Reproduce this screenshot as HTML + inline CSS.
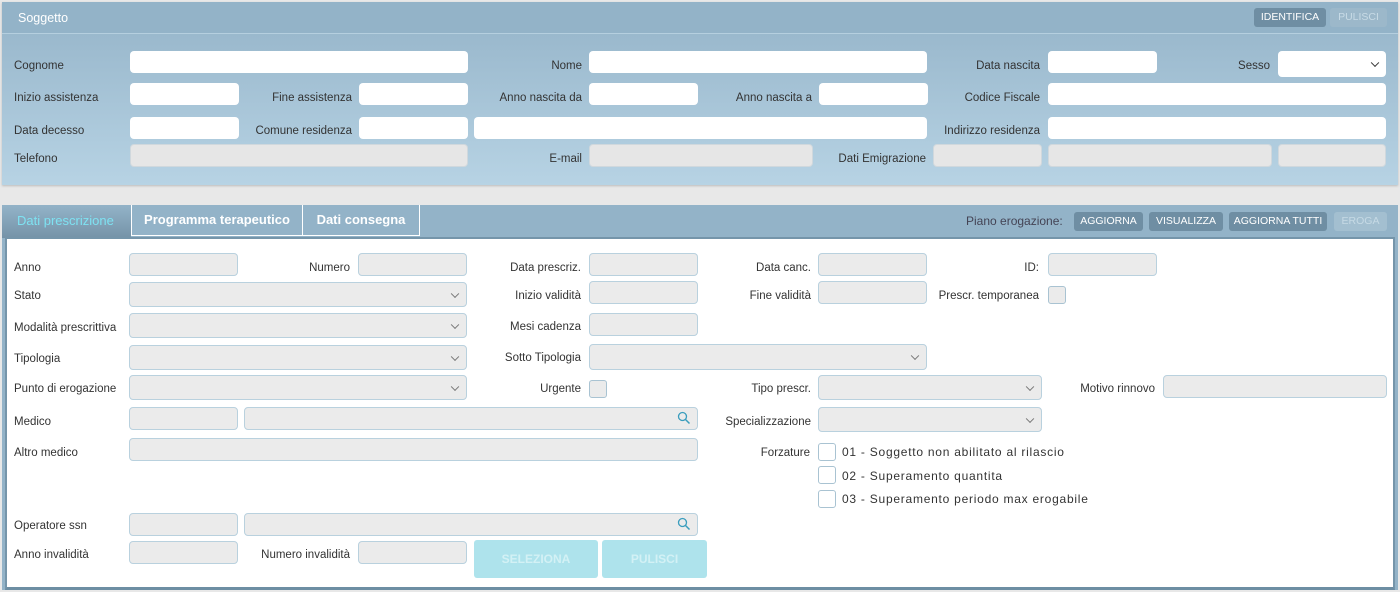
<!DOCTYPE html>
<html><head><meta charset="utf-8"><style>
*{box-sizing:border-box;margin:0;padding:0}
body{width:1400px;height:592px;background:#e8e8e8;font-family:"Liberation Sans",sans-serif;font-size:11.5px;color:#333;position:relative;overflow:hidden}
.a{position:absolute}
.p1{left:2px;top:2px;width:1396px;height:183px;background:linear-gradient(#94b3c8,#b7d3e4);box-shadow:0 1px 2px #bbb}
.h1{left:2px;top:2px;width:1396px;height:32px;background:#93b3c8;border-bottom:1px solid #b5cfdf;color:#fff;font-size:12.5px;padding:9px 0 0 16px}
.l{position:absolute;text-align:right;white-space:nowrap;line-height:14px}
.ll{position:absolute;white-space:nowrap;line-height:14px}
.w{position:absolute;background:#fff;border-radius:4px;height:22px}
.g{position:absolute;background:#ebebeb;border:1px solid #b9d1de;border-radius:4px;height:23px}
.gt{position:absolute;background:#e6e6e6;border-radius:4px;height:23px;border:1px solid #d0d8dd}
.btn{position:absolute;border-radius:3px;color:#fff;font-size:10.5px;text-align:center;line-height:19px;height:19px}
.chev{position:absolute;right:8px;top:50%;width:6px;height:6px;border-right:1.5px solid #777;border-bottom:1.5px solid #777;transform:translateY(-70%) rotate(45deg)}
.chk{position:absolute;width:18px;height:18px;border:1px solid #a9c3d2;border-radius:3px;background:#fff}
.srch{position:absolute;right:6px;top:3px}
.fz{font-size:12px;letter-spacing:0.75px}
</style></head><body>
<div class="a p1"></div>
<div class="a h1">Soggetto</div>
<div class="btn" style="left:1254px;top:8px;width:72px;background:#6f8ea3">IDENTIFICA</div>
<div class="btn" style="left:1330px;top:8px;width:57px;background:#9cb8ca;color:#c8dbe6">PULISCI</div>

<div class="ll" style="left:14px;top:59px">Cognome</div>
<div class="w" style="left:130px;top:51px;width:338px"></div>
<div class="l" style="left:480px;width:102px;top:59px">Nome</div>
<div class="w" style="left:589px;top:51px;width:338px"></div>
<div class="l" style="left:900px;width:140px;top:59px">Data nascita</div>
<div class="w" style="left:1048px;top:51px;width:109px"></div>
<div class="l" style="left:1200px;width:70px;top:59px">Sesso</div>
<div class="w" style="left:1278px;top:51px;width:108px;height:26px"><div class="chev" style="border-color:#333"></div></div>

<div class="ll" style="left:14px;top:91px">Inizio assistenza</div>
<div class="w" style="left:130px;top:83px;width:109px"></div>
<div class="l" style="left:240px;width:112px;top:91px">Fine assistenza</div>
<div class="w" style="left:359px;top:83px;width:109px"></div>
<div class="l" style="left:480px;width:102px;top:91px">Anno nascita da</div>
<div class="w" style="left:589px;top:83px;width:109px"></div>
<div class="l" style="left:700px;width:112px;top:91px">Anno nascita a</div>
<div class="w" style="left:819px;top:83px;width:109px"></div>
<div class="l" style="left:900px;width:140px;top:91px">Codice Fiscale</div>
<div class="w" style="left:1048px;top:83px;width:338px"></div>

<div class="ll" style="left:14px;top:124px">Data decesso</div>
<div class="w" style="left:130px;top:117px;width:109px"></div>
<div class="l" style="left:240px;width:112px;top:124px">Comune residenza</div>
<div class="w" style="left:359px;top:117px;width:109px"></div>
<div class="w" style="left:474px;top:117px;width:453px"></div>
<div class="l" style="left:900px;width:140px;top:124px">Indirizzo residenza</div>
<div class="w" style="left:1048px;top:117px;width:338px"></div>

<div class="ll" style="left:14px;top:152px">Telefono</div>
<div class="gt" style="left:130px;top:144px;width:338px"></div>
<div class="l" style="left:480px;width:102px;top:152px">E-mail</div>
<div class="gt" style="left:589px;top:144px;width:224px"></div>
<div class="l" style="left:800px;width:126px;top:152px">Dati Emigrazione</div>
<div class="gt" style="left:933px;top:144px;width:109px"></div>
<div class="gt" style="left:1048px;top:144px;width:224px"></div>
<div class="gt" style="left:1278px;top:144px;width:108px"></div>

<div class="a" style="left:2px;top:205px;width:1396px;height:385px;background:#93b3c8"></div>
<div class="a" style="left:2px;top:205px;width:129px;height:33px;background:linear-gradient(#93b3c8,#7593a8);color:#7ee2f2;font-size:13px;padding:8px 0 0 15px">Dati prescrizione</div>
<div class="a" style="left:131px;top:205px;width:172px;height:31px;border:1.5px solid #fff;border-top:none;color:#fff;font-size:13px;font-weight:bold;text-align:center;padding-top:7px">Programma terapeutico</div>
<div class="a" style="left:303px;top:205px;width:117px;height:31px;border:1.5px solid #fff;border-top:none;border-left:none;color:#fff;font-size:13px;font-weight:bold;text-align:center;padding-top:7px">Dati consegna</div>
<div class="ll" style="left:966px;top:214px;font-size:12px;color:#445">Piano erogazione:</div>
<div class="btn" style="left:1074px;top:212px;width:69px;background:#6f8ea3">AGGIORNA</div>
<div class="btn" style="left:1149px;top:212px;width:74px;background:#6f8ea3">VISUALIZZA</div>
<div class="btn" style="left:1229px;top:212px;width:98px;background:#6f8ea3">AGGIORNA TUTTI</div>
<div class="btn" style="left:1334px;top:212px;width:53px;background:#a3bfd0;color:#c6dae5">EROGA</div>
<div class="a" style="left:5px;top:237px;width:1390px;height:353px;background:#fff;border:2px solid #7595aa;border-bottom:3px solid #6d8ea3"></div>

<div class="ll" style="left:14px;top:261px">Anno</div>
<div class="g" style="left:129px;top:253px;width:109px"></div>
<div class="l" style="left:240px;width:110px;top:261px">Numero</div>
<div class="g" style="left:358px;top:253px;width:109px"></div>
<div class="l" style="left:480px;width:101px;top:261px">Data prescriz.</div>
<div class="g" style="left:589px;top:253px;width:109px"></div>
<div class="l" style="left:700px;width:111px;top:261px">Data canc.</div>
<div class="g" style="left:818px;top:253px;width:109px"></div>
<div class="l" style="left:900px;width:139px;top:261px">ID:</div>
<div class="g" style="left:1048px;top:253px;width:109px"></div>

<div class="ll" style="left:14px;top:289px">Stato</div>
<div class="g" style="left:129px;top:282px;width:338px;height:25px"><div class="chev"></div></div>
<div class="l" style="left:480px;width:101px;top:289px">Inizio validità</div>
<div class="g" style="left:589px;top:281px;width:109px"></div>
<div class="l" style="left:700px;width:111px;top:289px">Fine validità</div>
<div class="g" style="left:818px;top:281px;width:109px"></div>
<div class="l" style="left:900px;width:139px;top:289px">Prescr. temporanea</div>
<div class="chk" style="left:1048px;top:286px;background:#ebebeb"></div>

<div class="ll" style="left:14px;top:321px">Modalità prescrittiva</div>
<div class="g" style="left:129px;top:313px;width:338px;height:25px"><div class="chev"></div></div>
<div class="l" style="left:480px;width:101px;top:320px">Mesi cadenza</div>
<div class="g" style="left:589px;top:313px;width:109px"></div>

<div class="ll" style="left:14px;top:352px">Tipologia</div>
<div class="g" style="left:129px;top:345px;width:338px;height:25px"><div class="chev"></div></div>
<div class="l" style="left:480px;width:101px;top:351px">Sotto Tipologia</div>
<div class="g" style="left:589px;top:344px;width:338px;height:26px"><div class="chev"></div></div>

<div class="ll" style="left:14px;top:382px">Punto di erogazione</div>
<div class="g" style="left:129px;top:375px;width:338px;height:25px"><div class="chev"></div></div>
<div class="l" style="left:480px;width:101px;top:382px">Urgente</div>
<div class="chk" style="left:589px;top:380px;background:#ebebeb"></div>
<div class="l" style="left:700px;width:111px;top:382px">Tipo prescr.</div>
<div class="g" style="left:818px;top:375px;width:224px;height:25px"><div class="chev"></div></div>
<div class="l" style="left:1040px;width:115px;top:382px">Motivo rinnovo</div>
<div class="g" style="left:1163px;top:375px;width:224px"></div>

<div class="ll" style="left:14px;top:415px">Medico</div>
<div class="g" style="left:129px;top:407px;width:109px"></div>
<div class="g" style="left:244px;top:407px;width:454px"><svg class="srch" width="14" height="14" viewBox="0 0 14 14"><circle cx="5.5" cy="5.5" r="4" fill="none" stroke="#3a9dbd" stroke-width="1.3"/><line x1="8.5" y1="8.5" x2="12.5" y2="12.5" stroke="#3a9dbd" stroke-width="1.5"/></svg></div>
<div class="l" style="left:700px;width:111px;top:415px">Specializzazione</div>
<div class="g" style="left:818px;top:407px;width:224px;height:25px"><div class="chev"></div></div>

<div class="ll" style="left:14px;top:446px">Altro medico</div>
<div class="g" style="left:129px;top:438px;width:569px"></div>
<div class="l" style="left:700px;width:110px;top:446px">Forzature</div>
<div class="chk" style="left:818px;top:443px"></div>
<div class="ll fz" style="left:842px;top:445px">01 - Soggetto non abilitato al rilascio</div>
<div class="chk" style="left:818px;top:466px"></div>
<div class="ll fz" style="left:842px;top:469px">02 - Superamento quantita</div>
<div class="chk" style="left:818px;top:490px"></div>
<div class="ll fz" style="left:842px;top:492px">03 - Superamento periodo max erogabile</div>

<div class="ll" style="left:14px;top:519px">Operatore ssn</div>
<div class="g" style="left:129px;top:513px;width:109px"></div>
<div class="g" style="left:244px;top:513px;width:454px"><svg class="srch" width="14" height="14" viewBox="0 0 14 14"><circle cx="5.5" cy="5.5" r="4" fill="none" stroke="#3a9dbd" stroke-width="1.3"/><line x1="8.5" y1="8.5" x2="12.5" y2="12.5" stroke="#3a9dbd" stroke-width="1.5"/></svg></div>

<div class="ll" style="left:14px;top:548px">Anno invalidità</div>
<div class="g" style="left:129px;top:541px;width:109px"></div>
<div class="l" style="left:240px;width:110px;top:548px">Numero invalidità</div>
<div class="g" style="left:358px;top:541px;width:109px"></div>
<div class="btn" style="left:474px;top:540px;width:124px;height:38px;line-height:38px;background:#aee3ec;color:#d3f1f5;font-size:12px;font-weight:bold">SELEZIONA</div>
<div class="btn" style="left:602px;top:540px;width:105px;height:38px;line-height:38px;background:#aee3ec;color:#d3f1f5;font-size:12px;font-weight:bold">PULISCI</div>
</body></html>
